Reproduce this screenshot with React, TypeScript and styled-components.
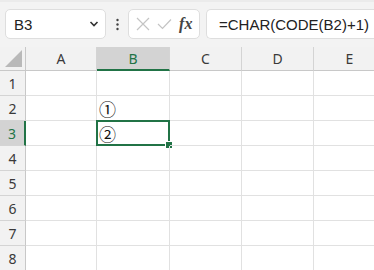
import { Fragment } from "react";
import styled, { createGlobalStyle } from "styled-components";

const GlobalStyle = createGlobalStyle`
  html, body {
    margin: 0;
    padding: 0;
    background: #ffffff;
    overflow: hidden;
  }
  body {
    font-family: "Liberation Sans", "Noto Sans CJK JP", sans-serif;
  }
`;

const Page = styled.div`
  width: 374px;
  height: 270px;
  overflow: hidden;
  display: flex;
  flex-direction: column;
`;

const Toolbar = styled.div`
  height: 47px;
  box-sizing: border-box;
  padding: 7px 0 8px 5px;
  background: #f3f3f3;
  border-top: 2px solid #ebebeb;
  display: flex;
  align-items: stretch;
  flex-shrink: 0;
`;

const Box = styled.div<{ w?: number }>`
  box-sizing: border-box;
  ${(p) => (p.w ? `width: ${p.w}px;` : "flex: 1;")}
  background: #ffffff;
  border: 1px solid #dedede;
  border-radius: 5px;
  display: flex;
  align-items: center;
  flex-shrink: 0;
`;

const NameBox = styled(Box)`
  padding: 0 6px 0 8px;
  justify-content: space-between;
  font-size: 15px;
  color: #222;
`;

const FormulaBox = styled(Box)`
  padding-left: 12px;
  border-right: none;
  border-radius: 5px 0 0 5px;
  font-size: 15px;
  color: #222;
  white-space: nowrap;
`;

const FnBox = styled(Box)`
  justify-content: space-around;
  padding: 0 3px;
  margin-right: 6px;
`;

const Dots = styled.div`
  width: 22px;
  display: flex;
  align-items: center;
  justify-content: center;
`;

const Fx = styled.span`
  font-family: "Liberation Serif", serif;
  font-style: italic;
  font-weight: bold;
  font-size: 16px;
  color: #444;
`;

const Grid = styled.div`
  display: grid;
  grid-template-columns: 26px 71px 73px 72px 72px 72px;
  grid-auto-rows: 25px;
  grid-template-rows: 24px;
  background: #ffffff;
`;

const Corner = styled.div`
  background: #f2f2f2;
  border-right: 1px solid #c8c8c8;
  border-bottom: 1px solid #c8c8c8;
  box-sizing: border-box;
  display: flex;
  align-items: flex-end;
  justify-content: flex-end;
  padding: 0 3px 3px 0;
`;

const ColHead = styled.div<{ active?: boolean }>`
  box-sizing: border-box;
  background: ${(p) => (p.active ? "#d3d3d3" : "#f2f2f2")};
  border-right: 1px solid #d4d4d4;
  border-bottom: ${(p) => (p.active ? "2px solid #217346" : "1px solid #c8c8c8")};
  color: ${(p) => (p.active ? "#217346" : "#3a3a3a")};
  font-family: "Noto Sans", sans-serif;
  font-size: 14px;
  display: flex;
  align-items: center;
  justify-content: center;
`;

const RowHead = styled.div<{ active?: boolean }>`
  box-sizing: border-box;
  background: ${(p) => (p.active ? "#d3d3d3" : "#f2f2f2")};
  border-right: ${(p) => (p.active ? "2px solid #217346" : "1px solid #c8c8c8")};
  border-bottom: 1px solid #d4d4d4;
  color: ${(p) => (p.active ? "#217346" : "#3a3a3a")};
  font-family: "Noto Sans", sans-serif;
  font-size: 14px;
  display: flex;
  align-items: center;
  justify-content: center;
`;

const Cell = styled.div<{ selected?: boolean }>`
  position: relative;
  box-sizing: border-box;
  border-right: 1px solid #e1e1e1;
  border-bottom: 1px solid #e1e1e1;
  font-family: "Noto Sans CJK JP", sans-serif;
  font-size: 17px;
  color: #111;
  display: flex;
  align-items: center;
  padding-left: 2px;

  ${(p) =>
    p.selected &&
    `
    &::before {
      content: "";
      position: absolute;
      left: -1px;
      top: -1px;
      right: -1px;
      bottom: -1px;
      border: 2px solid #217346;
    }
    &::after {
      content: "";
      position: absolute;
      right: -4px;
      bottom: -4px;
      width: 6px;
      height: 6px;
      background: #217346;
      border: 1px solid #fff;
    }
  `}
`;

const cols = ["A", "B", "C", "D", "E"];
const rows = [1, 2, 3, 4, 5, 6, 7, 8];
const values: Record<string, string> = { B2: "①", B3: "②" };

export default function App() {
  return (
    <Page>
      <GlobalStyle />
      <Toolbar>
        <NameBox w={101}>
          <span>B3</span>
          <svg width="10" height="8" viewBox="0 0 10 8">
            <path d="M1.5 2 L5 5.5 L8.5 2" fill="none" stroke="#333" strokeWidth="1.6" />
          </svg>
        </NameBox>
        <Dots>
          <svg width="3" height="13" viewBox="0 0 3 13">
            <circle cx="1.5" cy="2" r="1.2" fill="#444" />
            <circle cx="1.5" cy="6.5" r="1.2" fill="#444" />
            <circle cx="1.5" cy="11" r="1.2" fill="#444" />
          </svg>
        </Dots>
        <FnBox w={72}>
          <svg width="14" height="14" viewBox="0 0 14 14">
            <path d="M1 1 L13 13 M13 1 L1 13" stroke="#c4c4c4" strokeWidth="1.2" />
          </svg>
          <svg width="15" height="12" viewBox="0 0 15 12">
            <path d="M1 6 L5.5 10.5 L14 1.5" fill="none" stroke="#c4c4c4" strokeWidth="1.2" />
          </svg>
          <Fx>fx</Fx>
        </FnBox>
        <FormulaBox>=CHAR(CODE(B2)+1)</FormulaBox>
      </Toolbar>
      <Grid>
        <Corner>
          <svg width="17" height="17" viewBox="0 0 17 17">
            <path d="M17 0 L17 17 L0 17 Z" fill="#b9b9b9" />
          </svg>
        </Corner>
        {cols.map((c) => (
          <ColHead key={c} active={c === "B"}>
            {c}
          </ColHead>
        ))}
        {rows.map((r) => (
          <Fragment key={r}>
            <RowHead active={r === 3}>{r}</RowHead>
            {cols.map((c) => (
              <Cell key={c + r} selected={c + r === "B3"}>
                {values[c + r] || ""}
              </Cell>
            ))}
          </Fragment>
        ))}
      </Grid>
    </Page>
  );
}
